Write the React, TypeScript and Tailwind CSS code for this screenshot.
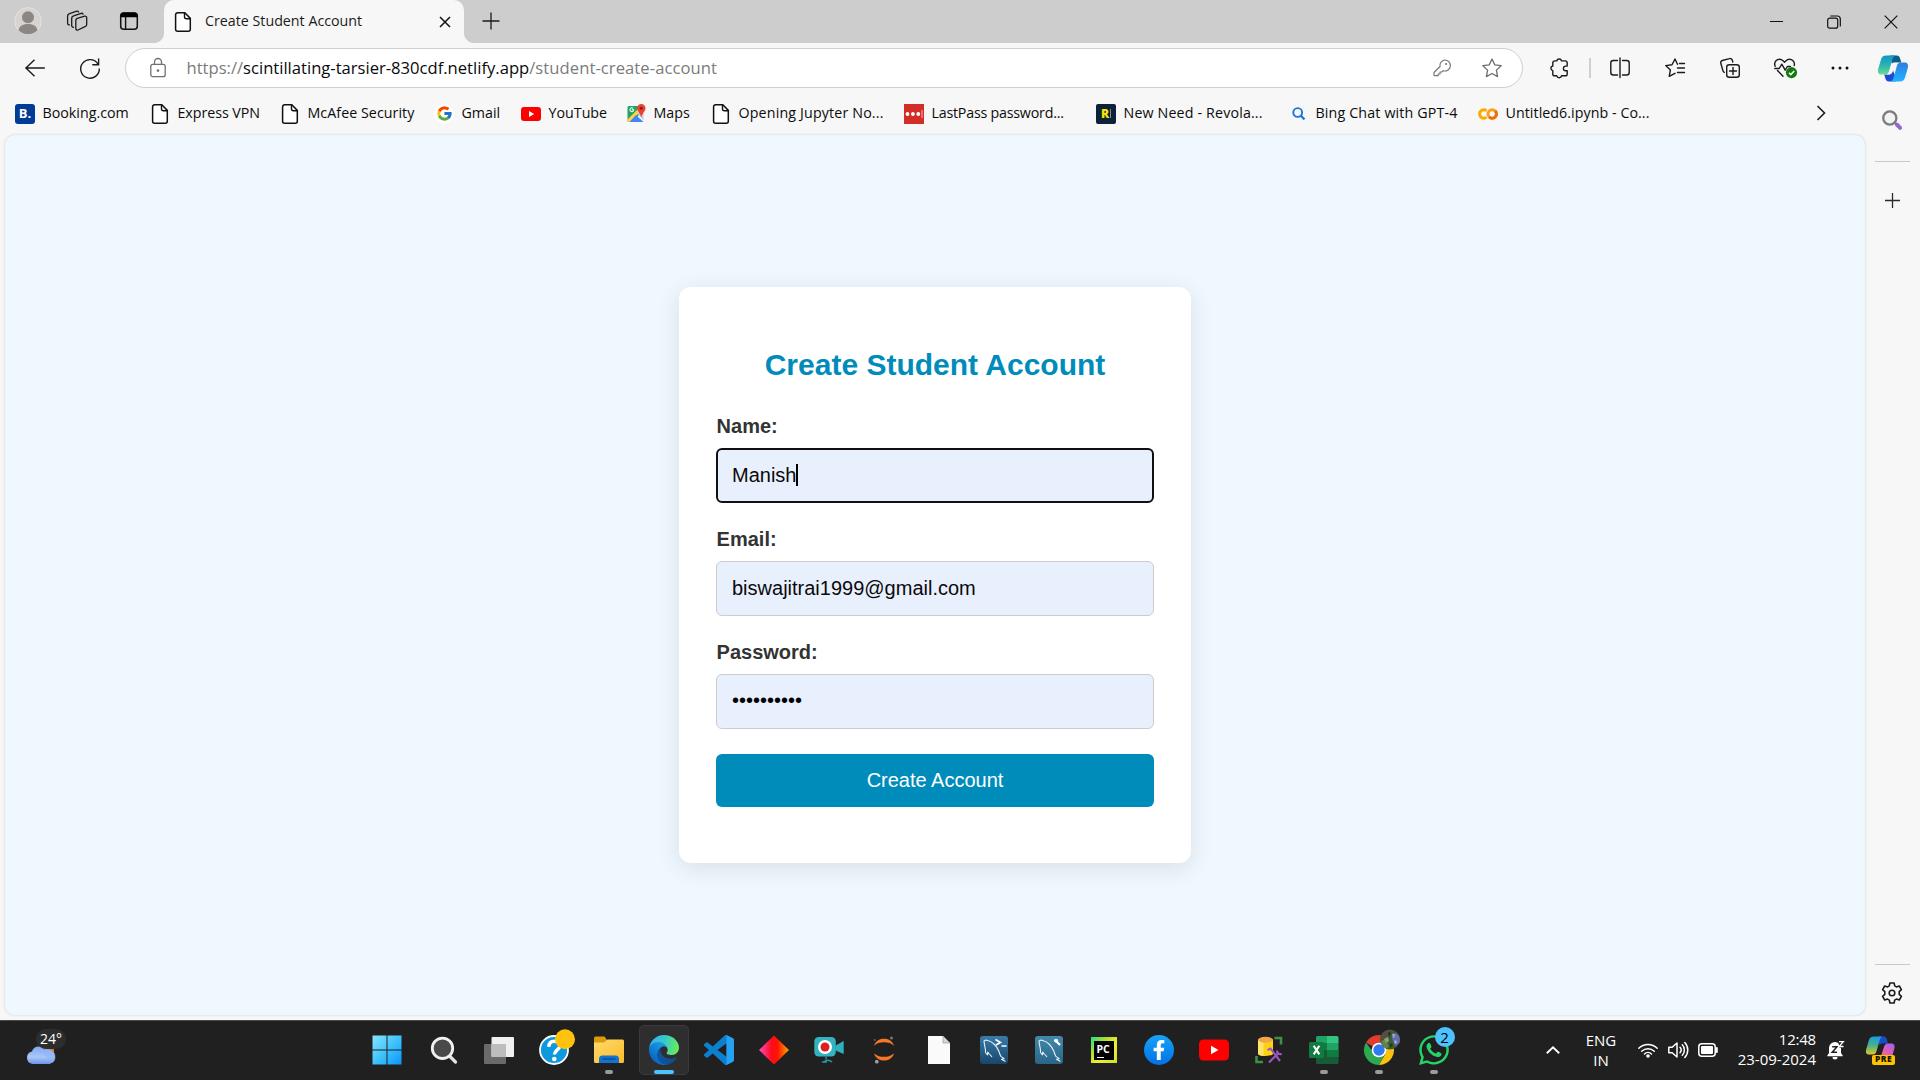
import React from "react";
import { FcGoogle } from "react-icons/fc";
import { FaFacebookF, FaWhatsapp } from "react-icons/fa";

type Box = { w: number; h: number; children: React.ReactNode; className?: string };

function Ico({ w, h, children, className = "" }: Box) {
  return (
    <svg width={w} height={h} viewBox={`0 0 ${w} ${h}`} fill="none" className={`block shrink-0 overflow-visible ${className}`}>
      {children}
    </svg>
  );
}

const line = { stroke: "#1b1b1b", strokeWidth: 1.4, strokeLinecap: "round", strokeLinejoin: "round" } as const;

function FileIcon() {
  return (
    <Ico w={20} h={20}>
      <path d="M4.6.8h7.2l5.5 5.6v10.8a2 2 0 0 1-2 2H4.6a2 2 0 0 1-2-2V2.8a2 2 0 0 1 2-2Z" fill="#fff" stroke="#111" strokeWidth="1.5" />
      <path d="M11.5 1v3.800a2 2 0 0 0 2 2h3.600" stroke="#111" strokeWidth="1.400" />
    </Ico>
  );
}

/* ---------- Tab strip ---------- */

function TabStrip() {
  return (
    <div className="flex h-[43px] w-full shrink-0 bg-[#cdcdcd]">
      <div className="flex h-[42px] w-14 items-center justify-center">
        <Ico w={28} h={28}>
          <circle cx="14" cy="14" r="13.300" fill="#d6d3d0" stroke="#e6e4e1" />
          <circle cx="14" cy="10.300" r="6" fill="#8b8784" />
          <path d="M4.500 23.300c.6-4 4-6.300 9.500-6.300s8.900 2.300 9.500 6.300A13.300 13.300 0 0 1 14 27.200a13.300 13.300 0 0 1-9.500-3.900Z" fill="#8b8784" />
        </Ico>
      </div>
      <div className="flex h-[42px] w-[42px] items-center justify-center">
        <Ico w={22} h={22}>
          <g stroke="#1b1b1b" strokeWidth="1.300" strokeLinejoin="round" strokeLinecap="round">
            <path d="m11.200 8.300 7.500-2.100a1.600 1.600 0 0 1 2 1.600v6.600a2.400 2.400 0 0 1-1.700 2.300l-7 3.300a1.600 1.600 0 0 1-2.200-1.500v-8a2.400 2.400 0 0 1 1.400-2.200Z" />
            <path d="M7.500 17.300a1.700 1.700 0 0 1-1.800-1.700V8.300a2.600 2.600 0 0 1 1.900-2.500l7.600-2.500a1.500 1.500 0 0 1 1.800.9" />
            <path d="M3.500 14.900A1.700 1.700 0 0 1 1.600 13.200V6.100a2.600 2.600 0 0 1 1.900-2.500L10.800 1.200a1.500 1.500 0 0 1 1.800.8" />
          </g>
        </Ico>
      </div>
      <div className="flex h-[42px] w-[62px] items-center justify-center">
        <Ico w={20} h={20}>
          <rect x="1.700" y="1.900" width="16.600" height="16.400" rx="3" stroke="#111" strokeWidth="1.500" />
          <path d="M1.500 6.300V4.500a3 3 0 0 1 3-3h11a3 3 0 0 1 3 3v1.800Z" fill="#000" />
          <path d="M6.600 6v12" stroke="#111" strokeWidth="1.400" />
        </Ico>
      </div>
      <div className="relative ml-1 flex w-[300px] rounded-t-[10px] bg-[#f7f7f7]">
        <div className="absolute bottom-0 -left-2.5 size-2.5 bg-[radial-gradient(circle_at_0_0,transparent_9.5px,#f7f7f7_10.5px)]" />
        <div className="absolute -right-2.5 bottom-0 size-2.5 bg-[radial-gradient(circle_at_100%_0,transparent_9.5px,#f7f7f7_10.5px)]" />
        <div className="ml-[9px] flex h-11 items-center">
          <FileIcon />
        </div>
        <span className="ml-3 h-[42px] text-[14.250px] leading-[41px] whitespace-nowrap text-[#1b1b1b]">Create Student Account</span>
        <div className="mr-[13.500px] ml-auto flex h-11 items-center">
          <Ico w={12} h={12}>
            <path d="M1 1l10 10M11 1 1 11" stroke="#111" strokeWidth="1.500" />
          </Ico>
        </div>
      </div>
      <div className="flex h-[41px] w-[53px] items-center justify-center">
        <Ico w={18} h={18}>
          <path d="M9 .5v17M.5 9h17" stroke="#1b1b1b" strokeWidth="1.300" />
        </Ico>
      </div>
      <div className="mr-px ml-auto flex h-[43px] items-center">
        <div className="flex w-[57px] justify-center">
          <Ico w={13} h={13}>
            <path d="M0 6.500h13" stroke="#111" />
          </Ico>
        </div>
        <div className="flex w-[57px] justify-center">
          <Ico w={14} h={14}>
            <rect x=".7" y="3.200" width="10" height="10" rx="2" stroke="#111" strokeWidth="1.200" />
            <path d="M3.300 1h7a3 3 0 0 1 3 3v7.500" stroke="#111" strokeWidth="1.200" />
          </Ico>
        </div>
        <div className="flex w-[57px] justify-center">
          <Ico w={14} h={14}>
            <path d="m.7.7 12.600 12.600M13.300.7.7 13.300" stroke="#111" strokeWidth="1.200" />
          </Ico>
        </div>
      </div>
    </div>
  );
}

/* ---------- Toolbar ---------- */

function ToolSlot({ children }: { children: React.ReactNode }) {
  return <div className="flex w-[55px] shrink-0 justify-center">{children}</div>;
}

function Toolbar() {
  return (
    <div className="flex h-[50px] items-center">
      <div className="flex w-[70px] shrink-0 justify-center">
        <Ico w={20} h={18}>
          <path d="M9.500.8.900 9l8.600 8.200M1.200 9h18.600" stroke="#1b1b1b" strokeWidth="1.400" />
        </Ico>
      </div>
      <div className="flex w-10 shrink-0 justify-center">
        <Ico w={20} h={22}>
          <path d="M18.200 7.500A9.300 9.300 0 1 0 19.300 11.500M18.600 1.500v6.300h-6.300" stroke="#1b1b1b" strokeWidth="1.400" />
        </Ico>
      </div>
      <div className="ml-[15px] flex h-10 w-[1398px] shrink-0 items-center rounded-full border border-[#cfcfcf] bg-white pl-6 text-[16.600px]">
        <Ico w={16} h={20}>
          <rect x=".8" y="6.300" width="14.400" height="12.400" rx="2" stroke="#707070" strokeWidth="1.300" />
          <path d="M4.500 6V4a3.500 3.500 0 0 1 7 0v2" stroke="#707070" strokeWidth="1.300" />
          <circle cx="8" cy="12.600" r="1.300" fill="#707070" />
        </Ico>
        <span className="ml-[20.500px] text-[#7b7b7b]">https://</span>
        <span className="text-[#0a0a0a]">scintillating-tarsier-830cdf.netlify.app</span>
        <span className="tracking-[0.070px] text-[#7b7b7b]">/student-create-account</span>
        <div className="mr-[20px] ml-auto flex items-center gap-[31px]">
          <Ico w={18} h={18}>
            <path d="M11.700 1a5.500 5.500 0 1 1-1.600 10.700L8.900 13H7v2H5.200v1.600H1.600a.6.6 0 0 1-.6-.6v-2.500l6-6A5.500 5.500 0 0 1 11.700 1Z" stroke="#767676" strokeWidth="1.200" strokeLinejoin="round" />
            <circle cx="13.100" cy="5" r="1.100" fill="#767676" />
          </Ico>
          <Ico w={20} h={20}>
            <path d="m10 1 2.800 5.900 6.300.8-4.700 4.400 1.200 6.500L10 15.500l-5.600 3.100 1.200-6.500L.9 7.700l6.300-.8Z" stroke="#6e6e6e" strokeWidth="1.300" strokeLinejoin="round" />
          </Ico>
        </div>
      </div>
      <div className="ml-2">
        <ToolSlot>
          <Ico w={20} h={20}>
            <path d="M5.700 2.900h2.100a2.400 2.400 0 0 1 4.700 0h3.800A1.900 1.900 0 0 1 18.200 4.800v3.300h-1.500a2.300 2.300 0 0 0 0 4.600h1.500v3.200a1.900 1.900 0 0 1-1.900 1.900h-3.800a2.400 2.400 0 0 1-4.700 0H5.700a1.900 1.900 0 0 1-1.900-1.900v-3.200a2.400 2.400 0 0 1 0-4.700V4.800a1.900 1.900 0 0 1 1.900-1.900Z" {...line} />
          </Ico>
        </ToolSlot>
      </div>
      <div className="mr-px ml-[3px] h-5 w-0.5 bg-[#cfcfcf]" />
      <ToolSlot>
        <Ico w={20} h={20}>
          <path d="M7.500 2.500H3.300A2.500 2.500 0 0 0 .8 5v9.500A2.500 2.500 0 0 0 3.300 17h4.200M12.500 2.500h4.200A2.500 2.500 0 0 1 19.200 5v9.500a2.500 2.500 0 0 1-2.500 2.500h-4.200M10 0v19.500" {...line} />
        </Ico>
      </ToolSlot>
      <ToolSlot>
        <Ico w={20} h={20}>
          <path d="M12.500 6.300 10 1 7 6.800l-6.300.8 4.700 4.400-1.200 6.400L10 15.300M14.500 5.500h5M12.500 10h7M12.500 14.500h7" {...line} />
        </Ico>
      </ToolSlot>
      <ToolSlot>
        <Ico w={20} h={20}>
          <rect x="6.700" y="6.700" width="12.600" height="12.500" rx="2.500" {...line} />
          <path d="M13 9.500v7M9.500 13h7M4.300 14.300A2 2 0 0 1 3 12.900L.8 5.300A2.200 2.200 0 0 1 2.300 2.500L9.500.6a2.200 2.200 0 0 1 2.800 1.600l.5 1.800" {...line} />
        </Ico>
      </ToolSlot>
      <ToolSlot>
        <Ico w={22} h={20}>
          <path d="M1.200 8.300a5 5 0 0 1 .8-5.500 4.900 4.900 0 0 1 7-.1l1.500 1.500L12 2.700a4.900 4.900 0 0 1 7 0 5 5 0 0 1 1.200 4.800M.8 10.500h4.400l2.600-4.300 3.400 6 2.200-3.700h3M3.500 12.500l5.500 5.700" {...line} />
          <circle cx="17.500" cy="14.600" r="5.600" fill="#107c10" />
          <path d="m15 14.800 1.800 1.800 3.400-3.700" stroke="#fff" strokeWidth="1.500" />
        </Ico>
      </ToolSlot>
      <ToolSlot>
        <Ico w={18} h={4}>
          <circle cx="2" cy="2" r="1.500" fill="#111" />
          <circle cx="9" cy="2" r="1.500" fill="#111" />
          <circle cx="16" cy="2" r="1.500" fill="#111" />
        </Ico>
      </ToolSlot>
    </div>
  );
}

/* ---------- Bookmarks ---------- */

function Bookmark({ icon, label, className }: { icon: React.ReactNode; label: string; className: string }) {
  return (
    <div className={`flex shrink-0 items-center whitespace-nowrap ${className}`}>
      <div className="flex w-5 shrink-0 justify-center">{icon}</div>
      <span className="ml-[7.500px] pb-0.5">{label}</span>
    </div>
  );
}

function Bookmarks() {
  return (
    <div className="flex h-[41px] items-center pl-[15px] text-[14.250px] text-[#0c0c0c]">
      <Bookmark
        className="w-[135px]"
        label="Booking.com"
        icon={<div className="flex size-5 items-center justify-center rounded-[3px] bg-[#003b95] text-[13px] leading-none font-bold text-white">B.</div>}
      />
      <Bookmark className="w-[130px] tracking-[-0.050px]" label="Express VPN" icon={<FileIcon />} />
      <Bookmark className="w-[154px] tracking-[0.050px]" label="McAfee Security" icon={<FileIcon />} />
      <Bookmark
        className="w-[87px]"
        label="Gmail"
        icon={
          <div className="flex size-5 items-center justify-center rounded-full bg-white">
            <FcGoogle size={17} />
          </div>
        }
      />
      <Bookmark
        className="w-[105px]"
        label="YouTube"
        icon={
          <Ico w={20} h={14}>
            <rect width="20" height="14" rx="3" fill="#f00" />
            <path d="m8 4 5.200 3L8 10Z" fill="#fff" />
          </Ico>
        }
      />
      <Bookmark
        className="w-[85px]"
        label="Maps"
        icon={
          <Ico w={20} h={20}>
            <path d="M3 2h11v8L6 18H3a1.500 1.500 0 0 1-1.500-1.500v-13A1.500 1.500 0 0 1 3 2Z" fill="#1fa463" />
            <path d="M1.500 15.500 13 4l2.500 2.500-11.500 11.500H3a1.500 1.500 0 0 1-1.500-1.500Z" fill="#ffd04b" />
            <path d="m10 11 7.500 7H3.500Z" fill="#4285f4" />
            <path d="m11.500 9.500 3-3 3 2v8Z" fill="#c9ccd1" />
            <path d="M8.200 5.300H6v1h1a1.300 1.300 0 1 1-.3-1.500l.8-.7a2.300 2.300 0 1 0 .7 2Z" fill="#fff" />
            <path d="M15.300 0a4.200 4.200 0 0 1 4.200 4.200c0 3-2.700 4-4.200 9-1.500-5-4.200-6-4.200-9A4.200 4.200 0 0 1 15.300 0Z" fill="#ea4335" />
            <circle cx="15.300" cy="4.200" r="1.500" fill="#8c1c13" />
          </Ico>
        }
      />
      <Bookmark className="w-[193px] tracking-[0.150px]" label="Opening Jupyter No..." icon={<FileIcon />} />
      <Bookmark
        className="w-[192px] tracking-[-0.220px]"
        label="LastPass password..."
        icon={
          <Ico w={20} h={20}>
            <path fill="#d32d27" d="M0 0h20v20H0z" />
            <circle cx="3.500" cy="10" r="1.900" fill="#fff" />
            <circle cx="8.900" cy="10" r="1.900" fill="#fff" />
            <circle cx="14.300" cy="10" r="1.900" fill="#fff" />
            <path d="M18 6v8" stroke="#f3b5b2" />
          </Ico>
        }
      />
      <Bookmark
        className="w-[192px] tracking-[0.150px]"
        label="New Need - Revola..."
        icon={
          <div className="flex size-5 items-center justify-center gap-px rounded-[2px] bg-[#0d2236] text-[12px] leading-none font-extrabold tracking-normal text-[#f7e600]">
            <span>R</span>
            <span className="h-[9px] w-px bg-[#7c8a97]" />
          </div>
        }
      />
      <Bookmark
        className="w-[190px] tracking-[0.150px]"
        label="Bing Chat with GPT-4"
        icon={
          <Ico w={14} h={14}>
            <circle cx="6.700" cy="5.500" r="4.400" stroke="#1a77d4" strokeWidth="1.900" />
            <path d="m9.800 8.700 3.700 3.700" stroke="#1a77d4" strokeWidth="2.200" />
          </Ico>
        }
      />
      <Bookmark
        className="w-[180px] tracking-[0.050px]"
        label="Untitled6.ipynb - Co..."
        icon={
          <Ico w={20} h={12}>
            <path d="M8.500 2.800A4.200 4.200 0 1 0 8.500 9.200" stroke="#fbab00" strokeWidth="3" />
            <circle cx="14.200" cy="6" r="4.200" stroke="#f9a11a" strokeWidth="3" />
            <path d="M11.200 9a4.200 4.200 0 0 0 6-6" stroke="#e8710a" strokeWidth="3" />
          </Ico>
        }
      />
      <Ico w={10} h={16} className="mr-[41px] mb-px ml-auto">
        <path d="m1.500 1 7 7-7 7" stroke="#1b1b1b" strokeWidth="1.600" />
      </Ico>
    </div>
  );
}

/* ---------- Page ---------- */

type FieldProps = { label: string; value: string; focused?: boolean; masked?: boolean };

function Field({ label, value, focused = false, masked = false }: FieldProps) {
  return (
    <div className="mb-6">
      <label className="mb-2.5 block pl-[0.600px] leading-6 font-bold text-[#333]">{label}</label>
      <div
        className={
          focused
            ? "flex h-[55px] items-center rounded-[6px] border-2 border-[#101010] bg-[#e8f0fe] pb-px pl-3.5"
            : "flex h-[55px] items-center rounded-[6px] border border-[#ccc] bg-[#e8f0fe] pb-px pl-[15px]"
        }
      >
        <span className={masked ? "pb-0.5 text-black" : "text-[#0a0a0a]"}>{value}</span>
        {focused && <span className="h-[22px] w-0.5 bg-black" />}
      </div>
    </div>
  );
}

function Page() {
  return (
    <main className="mt-px ml-[5px] flex h-[880px] w-[1860px] items-center justify-center rounded-[10px] bg-[#f0f8ff] font-['Liberation_Sans',sans-serif] text-[20px] shadow-[0_0_2px_1px_rgba(0,0,0,0.08)]">
      <form className="h-[576px] w-[512px] rounded-[12px] bg-white px-[37px] pt-[62px] shadow-[0_5px_25px_rgba(0,0,0,0.1)]">
        <h2 className="mb-[34px] text-center text-[30px] leading-[31px] font-bold text-[#008cba]">Create Student Account</h2>
        <Field label="Name:" value="Manish" focused />
        <Field label="Email:" value="biswajitrai1999@gmail.com" />
        <Field label="Password:" value="••••••••••" masked />
        <button type="button" className="mt-[25px] block h-[53px] w-full rounded-[6px] bg-[#008cba] pb-0.5 text-white">
          Create Account
        </button>
      </form>
    </main>
  );
}

/* ---------- Edge sidebar ---------- */

function Sidebar() {
  return (
    <aside className="flex w-[53px] shrink-0 flex-col items-center pr-[3px]">
      <div className="ml-0.5 flex h-[50px] items-center">
        <Ico w={30} h={27}>
          <defs>
            <linearGradient id="sl" x1="0" y1="0" x2="0" y2="1">
              <stop offset="0" stopColor="#1396c8" />
              <stop offset=".55" stopColor="#2fb5b0" />
              <stop offset="1" stopColor="#6fdc8c" />
            </linearGradient>
            <linearGradient id="sr" x1="0" y1="0" x2="0" y2="1">
              <stop offset="0" stopColor="#2f7de0" />
              <stop offset="1" stopColor="#1fb4ff" />
            </linearGradient>
          </defs>
          <path d="M12 .5h6.500c2.500 0 3.200 1.500 3.900 4l.9 3h-4.500c-2.600 0-3.200 1.400-4 4l-1.800-6Z" fill="#0c5f8c" />
          <path d="M17.500 26.500H11c-2.500 0-3.200-1.500-3.900-4l-.9-3h4.800c2.600 0 3.200-1.400 4-4l2 5Z" fill="#1b49d8" />
          <path d="M8.500.5h10c-3 0-3.700 2.500-4.700 6l-2.500 9c-.8 3-2 4-4.300 4H3.200c-3 0-3.700-2.500-3-5.500L3 4.500C3.800 1.700 5.300.5 8.500.5Z" fill="url(#sl)" />
          <path d="M21.500 26.500h-10c3 0 3.700-2.500 4.700-6l2.500-9c.8-3 2-4 4.300-4h3.800c3 0 3.700 2.500 3 5.500L27 22.500c-.8 2.800-2.300 4-5.500 4Z" fill="url(#sr)" />
          <path d="M20 7.500c-2.600 0-3.500 1.400-4.300 4l-1.200 4c-.8 2.500-1.800 4-4.500 4H8.500c1.700-.5 2.300-1.700 3-4l1.600-5.500c.8-2 1.900-2.500 3.700-2.500Z" fill="#f7f7f7" />
        </Ico>
      </div>
      <Ico w={22} h={22} className="mt-[16px]">
        <circle cx="8.800" cy="9" r="6.600" fill="#f3f3f3" stroke="#7c7c7c" strokeWidth="2.300" />
        <path d="m13.700 13.500 2 2" stroke="#7c7c7c" strokeWidth="2" />
        <path d="m15.800 15.500 3.300 3.300" stroke="#9267cf" strokeWidth="4" strokeLinecap="round" />
      </Ico>
      <div className="mt-[30px] h-px w-[35px] bg-[#c9c9c9]" />
      <Ico w={15} h={15} className="mt-[31px]">
        <path d="M7.500 0v15M0 7.500h15" stroke="#2b2b2b" strokeWidth="1.300" />
      </Ico>
      <div className="mt-auto h-px w-[35px] bg-[#c9c9c9]" />
      <Ico w={22} h={22} className="mt-[16.500px] mb-[16.500px]">
        <path
          d="M8.900 1h4.200l.6 2.900 1.700 1 2.900-.9 2.100 3.600-2.200 2v2.800l2.200 2-2.100 3.600-2.900-.9-1.700 1-.6 2.900H8.900l-.6-2.900-1.700-1-2.900.9-2.100-3.600 2.200-2V9.600l-2.200-2L3.700 4l2.900.9 1.700-1Z"
          {...line}
          strokeWidth={1.600}
        />
        <circle cx="11" cy="11" r="2.800" {...line} strokeWidth={1.600} />
      </Ico>
    </aside>
  );
}

/* ---------- Taskbar ---------- */

function Start() {
  return (
    <Ico w={30} h={30}>
      <defs>
        <linearGradient id="win" x1="0" y1="0" x2="30" y2="30" gradientUnits="userSpaceOnUse">
          <stop offset="0" stopColor="#8be4ff" />
          <stop offset=".5" stopColor="#3fc4fc" />
          <stop offset="1" stopColor="#0a93fb" />
        </linearGradient>
      </defs>
      <path fill="url(#win)" d="M.5.5h14v14H.5zM15.500.5h14v14h-14zM.5 15.500h14v14H.5zM15.500 15.500h14v14h-14z" />
    </Ico>
  );
}

function Search() {
  return (
    <Ico w={28} h={28}>
      <path d="m18.500 19 7 7" stroke="#e3e3e3" strokeWidth="3.200" strokeLinecap="round" />
      <circle cx="12.500" cy="12.300" r="10.200" fill="#4a4a4a" stroke="#f1f1f1" strokeWidth="2.800" />
    </Ico>
  );
}

function TaskView() {
  return (
    <Ico w={30} h={28}>
      <rect x="0" y="8" width="22" height="20" rx="1" fill="#6a6a6a" />
      <rect x="7.500" y="1" width="22.500" height="20" rx="1" fill="#f0f0f0" />
      <path d="M7.500 8H22v13H8.500a1 1 0 0 1-1-1Z" fill="#bdbdbd" />
    </Ico>
  );
}

function Help() {
  return (
    <Ico w={30} h={30}>
      <circle cx="15" cy="15" r="14" fill="#0d99dc" stroke="#fff" strokeWidth="1.800" />
      <path d="M9.800 11.800C10 8 12.200 6.200 15.300 6.200c3.300 0 5.400 2 5.400 4.700 0 4-5.200 4-5.200 8.600" stroke="#fff" strokeWidth="3.400" />
      <circle cx="15.300" cy="24" r="2.300" fill="#fff" />
      <circle cx="26" cy="4.300" r="10" fill="#ffc20e" />
    </Ico>
  );
}

function Folder() {
  return (
    <Ico w={30} h={28}>
      <defs>
        <linearGradient id="fo" x1="0" y1="0" x2="1" y2="1">
          <stop offset="0" stopColor="#ffdc6b" />
          <stop offset="1" stopColor="#fcb92b" />
        </linearGradient>
      </defs>
      <path d="M0 2a1.500 1.500 0 0 1 1.500-1.500h9L13 4v4H0Z" fill="#dc9a0c" />
      <path d="M0 6.500h10L13.500 3.500H28.500A1.500 1.500 0 0 1 30 5v20.500a1.500 1.500 0 0 1-1.500 1.500h-27A1.500 1.500 0 0 1 0 25.500Z" fill="url(#fo)" />
      <path d="M5 27v-4.500A3.500 3.500 0 0 1 8.500 19.500h13a3.500 3.500 0 0 1 3.500 3V27Z" fill="#1373cf" />
      <path d="M8.500 23h13" stroke="#0b4a92" strokeWidth="1.300" />
    </Ico>
  );
}

function Edge() {
  return (
    <svg width="30" height="30" viewBox="0 0 256 256" className="block">
      <defs>
        <linearGradient id="ea" x1="58" y1="177" x2="237" y2="177" gradientUnits="userSpaceOnUse">
          <stop offset="0" stopColor="#0c59a4" />
          <stop offset="1" stopColor="#114a8b" />
        </linearGradient>
        <linearGradient id="eb" x1="153" y1="95" x2="40" y2="218" gradientUnits="userSpaceOnUse">
          <stop offset="0" stopColor="#1b9de2" />
          <stop offset=".5" stopColor="#1483d8" />
          <stop offset="1" stopColor="#0a66c2" />
        </linearGradient>
        <linearGradient id="ec" x1="10" y1="60" x2="250" y2="120" gradientUnits="userSpaceOnUse">
          <stop offset="0" stopColor="#2fb4ee" />
          <stop offset=".45" stopColor="#36c6d0" />
          <stop offset="1" stopColor="#66eb5a" />
        </linearGradient>
      </defs>
      <g transform="translate(-4.63 -4.92)">
        <path fill="url(#ea)" d="M235.680 195.460a93.730 93.730 0 0 1-10.540 4.710 101.870 101.870 0 0 1-35.900 6.460c-47.320 0-88.540-32.550-88.540-74.320A31.480 31.480 0 0 1 117.130 105c-42.800 1.800-53.800 46.400-53.800 72.530 0 73.880 68.090 81.370 82.760 81.370 7.910 0 19.840-2.300 27-4.560l1.310-.44a128.340 128.340 0 0 0 66.600-52.800 4 4 0 0 0-5.320-5.640z" />
        <path fill="url(#eb)" d="M110.340 246.340A79.200 79.200 0 0 1 87.600 225a80.720 80.720 0 0 1 29.530-120c3.120-1.470 8.450-4.130 15.540-4a32.350 32.350 0 0 1 25.690 13 31.880 31.880 0 0 1 6.360 18.660c0-.21 24.460-79.600-80-79.600-43.900 0-80 41.660-80 78.210a130.150 130.150 0 0 0 12.110 56 128 128 0 0 0 156.380 67.110 75.550 75.550 0 0 1-62.780-8z" />
        <path fill="url(#ec)" d="M156.940 153.780c-.81 1.050-3.300 2.500-3.300 5.660 0 2.610 1.700 5.120 4.720 7.230 14.380 10 41.490 8.680 41.560 8.680a59.560 59.560 0 0 0 30.270-8.350 61.380 61.380 0 0 0 30.430-52.880c.26-22.410-8-37.310-11.340-43.910C228.090 28.760 182.350 4.920 132.610 4.920a128 128 0 0 0-128 126.200c.48-36.540 36.800-66.050 80-66.050 3.500 0 23.460.34 42 10.070 16.340 8.580 24.900 18.940 30.850 29.210 6.180 10.670 7.280 24.150 7.280 29.520s-2.740 13.330-7.800 19.910z" />
      </g>
    </svg>
  );
}

function VsCode() {
  return (
    <svg width="30" height="30" viewBox="0 0 100 100" className="block">
      <path
        fill="#0d7fcf"
        fillRule="evenodd"
        d="M70.900 99.300a6.200 6.200 0 0 0 4.960-.19l20.590-9.900A6.250 6.250 0 0 0 100 83.600V16.400a6.250 6.250 0 0 0-3.540-5.630L75.870.87a6.230 6.230 0 0 0-7.100 1.200L29.350 38.040 12.200 25.010a4.160 4.160 0 0 0-5.320.24L1.360 30.260a4.170 4.170 0 0 0 0 6.160L16.250 50 1.350 63.580a4.170 4.170 0 0 0 0 6.160l5.510 5.010a4.160 4.160 0 0 0 5.320.24l17.170-13.030L68.770 97.930a6.200 6.200 0 0 0 2.130 1.370zM75.010 27.300 45.110 50l29.900 22.700z"
      />
      <path fill="#25a2f2" d="M75.870.87 96.460 10.770A6.250 6.250 0 0 1 100 16.400v67.200a6.250 6.250 0 0 1-3.550 5.610L75.860 99.110c-2.500 1-5 .6-7.100-1.180 2.500 2 6.250.6 6.250-3V5.100c0-3.600-3.750-5-6.250-3a6.200 6.200 0 0 1 7.110-1.230z" />
    </svg>
  );
}

function Diamond() {
  return (
    <Ico w={30} h={30}>
      <defs>
        <linearGradient id="di" x1="0" y1="0" x2="1" y2="0">
          <stop offset="0" stopColor="#ff4ec0" />
          <stop offset=".42" stopColor="#ff0a1a" />
          <stop offset=".62" stopColor="#ff1400" />
          <stop offset="1" stopColor="#ffa800" />
        </linearGradient>
      </defs>
      <path d="m15 .5 15 14.500-15 14.500L0 15Z" fill="url(#di)" />
    </Ico>
  );
}

function Camera() {
  return (
    <Ico w={30} h={28}>
      <path d="M18 12.500 29.500 5v13L18 13Z" fill="#2299a8" />
      <path d="M22 9.300 29.500 5.300v12.400L22 14Z" fill="#2fb0bd" />
      <rect x=".3" y="1" width="21.500" height="19.500" rx="4.500" fill="#33b3c2" />
      <circle cx="11" cy="11" r="7" fill="#fff" />
      <circle cx="11" cy="11" r="4.500" fill="#e0201f" />
      <path d="M12 20.500v3M9.500 26.500c2-3 6-3 8.500-.5M8 26h5" stroke="#2299a8" strokeWidth="1.400" />
    </Ico>
  );
}

function Jupyter() {
  return (
    <Ico w={22} h={28}>
      <path d="M.8 9.800C3 4.200 7 2.700 11 2.700s8.200 1.500 10.200 7.100C18.500 7.300 15 6.200 11 6.200S3.500 7.300.8 9.800ZM.8 17.200c2.200 5.600 6.200 7.300 10.200 7.300s8.200-1.700 10.200-7.300c-2.700 2.500-6.200 3.600-10.200 3.600S3.500 19.700.8 17.200Z" fill="#f37726" />
      <circle cx="18.500" cy="2" r="1.500" fill="#767677" />
      <circle cx="3.800" cy="25.700" r="1.900" fill="#9e9e9e" />
      <circle cx="1.800" cy="4" r="1" fill="#616262" />
    </Ico>
  );
}

function BlankFile() {
  return (
    <Ico w={22} h={28}>
      <path d="M0 0h15l7 7v21H0Z" fill="#fafafa" />
      <path d="M15 0v7h7Z" fill="#d8d8d8" stroke="#8b8b8b" strokeWidth=".6" />
    </Ico>
  );
}

function Dolphin({ shell = false }: { shell?: boolean }) {
  return (
    <Ico w={28} h={28}>
      <defs>
        <linearGradient id="my" x1="0" y1="0" x2="0" y2="1">
          <stop offset="0" stopColor="#3a7ba8" />
          <stop offset="1" stopColor="#17476b" />
        </linearGradient>
        <linearGradient id="mw" x1="0" y1="0" x2="0" y2="1">
          <stop offset="0" stopColor="#4189ab" />
          <stop offset="1" stopColor="#2a6588" />
        </linearGradient>
      </defs>
      <rect width="28" height="28" rx="3" fill={shell ? "url(#my)" : "url(#mw)"} />
      <path
        d="M9.500 18.500 7.800 16l-.3 3-2-2.500c.5-3.500-1.300-7-1.300-10.500C3 4.700 5.500 3.600 7.800 4.500c5.500 1.500 8.500 5 11 10.500.7 2.200 1.200 4 2.200 5.500 1.300.8 2.300 1.300 3.200 2.300l-2.700.5 4 2.200M12 21l-2-2.500"
        stroke="#e7f1f7"
        strokeWidth="1.100"
        strokeLinejoin="round"
      />
      {shell ? (
        <path d="m15.500 3.500 5 3-4.500 2.500M21.500 10h5" stroke="#fff" strokeWidth="1.700" />
      ) : (
        <path d="m19.500 3.500 5.500 5.500M19.800 6l2.800-2.500" stroke="#fff" strokeWidth="2.300" />
      )}
    </Ico>
  );
}

function PyCharm() {
  return (
    <div className="flex size-[26px] items-center justify-center bg-[linear-gradient(135deg,#21e08a,#b8e02a_35%,#f0ee35_60%,#cbe02a)]">
      <div className="flex h-[19px] w-5 flex-col bg-black pt-1 pl-[3px]">
        <span className="text-[10.500px] leading-[9px] font-bold text-white">PC</span>
        <span className="mt-[3px] h-px w-[7px] bg-white" />
      </div>
    </div>
  );
}

function Facebook() {
  return (
    <div className="flex size-[30px] items-center justify-center rounded-full bg-linear-to-b from-[#1aa3f8] to-[#0670e8]">
      <FaFacebookF size={20} color="#fff" />
    </div>
  );
}

function YouTube() {
  return (
    <Ico w={30} h={22}>
      <rect y=".5" width="30" height="21" rx="4.500" fill="#f00" />
      <path d="m12 6.800 7.500 4.200-7.500 4.200Z" fill="#fff" />
    </Ico>
  );
}

function SqlTools() {
  return (
    <Ico w={28} h={28}>
      <path d="M3 3.500v14c0 3.300 15 3.300 15 0v-14Z" fill="#fcd116" />
      <path d="M3 3.500v14c0 1.500 2.500 2.300 5.500 2.500V3.500Z" fill="#ffe566" />
      <ellipse cx="10.500" cy="3.700" rx="7.500" ry="2.900" fill="#f0a64a" />
      <path d="M19.500 2h6.500v6.500M1.500 20v6h6.500" stroke="#3f8f46" strokeWidth="2.600" />
      <path d="m12.500 14 3-1.500 9.500 12.500M14 26.500l10-10M22 14.500c0 3 1.500 4 4.800 3.500" stroke="#9a57c0" strokeWidth="2.100" />
    </Ico>
  );
}

function Excel() {
  return (
    <Ico w={30} h={28}>
      <path fill="#21a366" d="M7 1.500A1.500 1.500 0 0 1 8.500 0H18v7H7z" />
      <path fill="#33c481" d="M18 0h10a1.500 1.500 0 0 1 1.500 1.500V7H18z" />
      <path fill="#107c41" d="M7 7h11v7H7zM18 14h11.500v7H18z" />
      <path fill="#21a366" d="M18 7h11.500v7H18z" />
      <path fill="#185c37" d="M7 14h11v7h11.500v5.500A1.500 1.500 0 0 1 28 28H8.500A1.500 1.500 0 0 1 7 26.500z" />
      <path fill="#107c41" d="M18 14h11.500v7H18z" />
      <rect y="6" width="15" height="16" rx="1.500" fill="#107c41" />
      <path d="m4.700 9.800 5.600 8.600M10.300 9.800l-5.600 8.600" stroke="#fff" strokeWidth="2.100" />
    </Ico>
  );
}

function Chrome() {
  return (
    <Ico w={30} h={30}>
      <path d="M15 15 2 7.500a15 15 0 0 1 26 0Z" fill="#e33b2e" />
      <path d="M15 15h-7.500L2 7.500A15 15 0 0 0 15 30l6-11Z" fill="#2da94f" />
      <path d="M15 8h13.300A15 15 0 0 1 15 30l6.300-11Z" fill="#fdc10b" />
      <circle cx="15" cy="15" r="7.300" fill="#fff" />
      <circle cx="15" cy="15" r="5.700" fill="#2f7af0" />
      <circle cx="26" cy="4.500" r="10" fill="#3f5a36" />
      <path d="M17 3a10 10 0 0 1 8-8.300l-1 6-4 5Z" fill="#5a4c45" />
      <path d="M17 7c2-3 5-3 6 0l2 5-3 1.500A10 10 0 0 1 17 7Z" fill="#5f8350" />
      <path d="M28 3c1-4 3-5 5-4.500A10 10 0 0 1 35.500 8l-4.500 3Z" fill="#6670a8" />
      <path d="M28-1c2-1.500 4 0 3 2.500l-2 1.500Z" fill="#98a3d8" />
      <path d="M30 6c2-1 3 0 3 1.500l-2 1.500Z" fill="#a5aee0" />
      <path d="m20 4 4-2 1 4-3 2Z" fill="#86a86a" />
      <path d="m24-3 3 1-2 4Z" fill="#1f2f1d" />
      <path d="m26 8 3 2-3 3Z" fill="#22351f" />
    </Ico>
  );
}

function WhatsApp() {
  return (
    <div className="relative">
      <FaWhatsapp size={34} color="#25d366" className="-m-0.5 block" />
      <div className="absolute -top-[6px] left-4 flex size-5 items-center justify-center rounded-full bg-[#4cc2ff] text-[15px] leading-none text-black">2</div>
    </div>
  );
}

const apps: { icon: React.ReactNode; open?: boolean; active?: boolean }[] = [
  { icon: <Search /> },
  { icon: <TaskView /> },
  { icon: <Help /> },
  { icon: <Folder />, open: true },
  { icon: <Edge />, active: true },
  { icon: <VsCode /> },
  { icon: <Diamond /> },
  { icon: <Camera /> },
  { icon: <Jupyter /> },
  { icon: <BlankFile /> },
  { icon: <Dolphin shell /> },
  { icon: <Dolphin /> },
  { icon: <PyCharm /> },
  { icon: <Facebook /> },
  { icon: <YouTube /> },
  { icon: <SqlTools /> },
  { icon: <Excel />, open: true },
  { icon: <Chrome />, open: true },
  { icon: <WhatsApp />, open: true },
];

function Weather() {
  return (
    <div className="relative h-[35px] w-10">
      <Ico w={30} h={20} className="absolute top-4 left-0">
        <defs>
          <linearGradient id="cl" x1="0" y1="0" x2="0" y2="1">
            <stop offset="0" stopColor="#7ea6f0" />
            <stop offset=".6" stopColor="#a9c8fa" />
            <stop offset="1" stopColor="#6c93e6" />
          </linearGradient>
        </defs>
        <path d="M18 2h10v6H18Z" fill="#e8731f" />
        <path d="M6.500 19A6.300 6.300 0 0 1 6 6.600 7 7 0 0 1 18.500 4.500 7.300 7.300 0 0 1 24 19Z" fill="url(#cl)" />
        <path d="M16 8c2-3.500 6-4.500 9-2.500a7 7 0 0 1 4.500 6.500 7 7 0 0 1-3 6" fill="#8fb4f5" opacity=".6" />
      </Ico>
      <div className="absolute top-0 left-2.5 flex h-5 w-[30px] items-center justify-center rounded-full bg-[#2d2d2d] pb-px text-[14px] text-white">24°</div>
    </div>
  );
}

function Tray() {
  const w = { stroke: "#fff", strokeWidth: 1.500, strokeLinecap: "round" } as const;
  return (
    <div className="ml-auto flex h-[60px] items-center text-[15px] leading-5 text-white">
      <Ico w={14} h={8}>
        <path d="m.8 7.200 6.200-6 6.200 6" stroke="#fff" strokeWidth="1.900" />
      </Ico>
      <div className="ml-[24px] w-[34px] text-center">
        <div>ENG</div>
        <div>IN</div>
      </div>
      <Ico w={20} h={16} className="ml-[20px]">
        <path d="M.8 6.300a13 13 0 0 1 18.400 0M3.700 9.200a9 9 0 0 1 12.600 0M6.500 12a5 5 0 0 1 7 0" {...w} />
        <circle cx="10" cy="14" r="1.800" fill="#fff" />
      </Ico>
      <Ico w={20} h={18} className="ml-[10px]">
        <path d="M.8 6.300h3.400L9 2v14l-4.800-4.300H.8Z" {...w} strokeLinejoin="round" />
        <path d="M12 6.300a4 4 0 0 1 0 5.400M14.300 3.800a7.500 7.500 0 0 1 0 10.400M16.800 1.500a11 11 0 0 1 0 15" {...w} />
      </Ico>
      <Ico w={20} h={14} className="ml-[10px]">
        <rect x=".8" y=".8" width="16.400" height="12.400" rx="3" {...w} />
        <rect x="3" y="3" width="12" height="8" rx="1" fill="#fff" />
        <path d="M18.800 5v4" {...w} strokeWidth={2} />
      </Ico>
      <div className="ml-[17px] w-[81px] pb-[3px] text-right whitespace-nowrap">
        <div className="tracking-[-0.200px]">12:48</div>
        <div>23-09-2024</div>
      </div>
      <Ico w={18} h={20} className="ml-[11px]">
        <path d="M8 2a6 6 0 0 1 6 6v5l1.700 2.500v.8H.3v-.8L2 13V8a6 6 0 0 1 6-6ZM5.500 17h5a2.500 2.500 0 0 1-5 0Z" fill="#fff" />
        <path d="M5.200 6.800h4.800l-4.800 5.500H10" stroke="#202020" strokeWidth="1.500" />
        <path d="M11 .5h6.500v7.200H12.500Z" fill="#202020" />
        <path d="M12 1.700h4.300L12 6.500h4.500" stroke="#fff" strokeWidth="1.300" />
      </Ico>
      <div className="relative mr-[25px] ml-[21px] h-[29px] w-[29px]">
        <Ico w={29} h={24}>
          <defs>
            <linearGradient id="cp1" x1="0" y1="0" x2="0" y2="1">
              <stop offset="0" stopColor="#189be8" />
              <stop offset=".5" stopColor="#4ab08a" />
              <stop offset="1" stopColor="#e4c722" />
            </linearGradient>
            <linearGradient id="cp2" x1="1" y1="0" x2="0" y2="1">
              <stop offset="0" stopColor="#a45cf0" />
              <stop offset=".5" stopColor="#e45fb5" />
              <stop offset="1" stopColor="#ff8060" />
            </linearGradient>
          </defs>
          <path d="M12 .5h5.500c2.500 0 3 1.500 3.700 4l.8 3h-4.500c-2 0-3 1.400-3.500 3l-1.500-5Z" fill="#1a4cc8" />
          <path d="M8 .5h9.500c-3 0-3.500 2.500-4.500 6l-2.300 8c-.8 3-2 4-4.200 4H3c-3 0-3.500-2.500-2.800-5.300L2.800 4.500C3.600 1.700 5 .5 8 .5Z" fill="url(#cp1)" />
          <path d="M20.500 24.500H11c3 0 3.500-2.500 4.500-6l2.300-7c.8-3 2-4 4.200-4h3.500c3 0 3.500 2.500 2.800 5.300L26 20.500c-.8 2.800-2.500 4-5.500 4Z" fill="url(#cp2)" />
          <path d="M19 7.500c-2 0-3 1.400-3.700 4l-2 6.500c-.5 1-1.500 1.500-3.300 1.500 1-1 1.300-2.500 1.800-4l1.400-5.300c.6-2 1.500-2.700 3.300-2.700Z" fill="#202020" />
        </Ico>
        <div className="absolute bottom-0 left-1.5 flex h-[10px] w-[23px] items-center justify-center rounded-[2px] bg-[#ffc400] text-[8.500px] leading-none font-extrabold tracking-[0.400px] text-[#1c1400]">PRE</div>
      </div>
    </div>
  );
}

function Taskbar() {
  return (
    <footer className="flex h-[60px] w-full shrink-0 bg-[#202020] shadow-[inset_0_1px_0_#4a4a4a]">
      <div className="w-[359px] shrink-0 pt-[9px] pl-[26px]">
        <Weather />
      </div>
      <div className="flex shrink-0">
        <div className="flex w-[57px] items-center pl-[13px]">
          <Start />
        </div>
        {apps.map((app, i) => (
          <div key={i} className="relative flex h-[60px] w-[55px] items-center justify-center">
            {app.active && <div className="absolute top-[5px] left-[3px] h-[50px] w-[50px] rounded-[5px] border border-[#3a3a3a] bg-[#2e2e2e]" />}
            <div className="relative">{app.icon}</div>
            {app.open && <div className="absolute bottom-[6px] left-[24px] h-1 w-2 rounded-full bg-[#9a9a9a]" />}
            {app.active && <div className="absolute bottom-[6px] left-[18px] h-1 w-5 rounded-full bg-[#4cc2ff]" />}
          </div>
        ))}
      </div>
      <Tray />
    </footer>
  );
}

export default function App() {
  return (
    <div className="flex h-[1080px] w-[1920px] flex-col overflow-hidden bg-[#f7f7f7] font-['Open_Sans',sans-serif]">
      <TabStrip />
      <div className="flex h-[977px] w-full shrink-0">
        <div className="w-[1867px] shrink-0">
          <Toolbar />
          <Bookmarks />
          <Page />
        </div>
        <Sidebar />
      </div>
      <Taskbar />
    </div>
  );
}
